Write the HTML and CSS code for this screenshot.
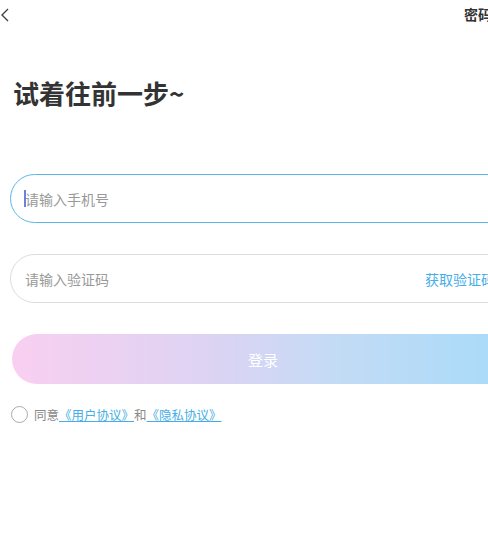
FILE: index.html
```html
<!DOCTYPE html>
<html lang="zh">
<head>
<meta charset="utf-8">
<link rel="stylesheet" href="styles.css">
</head>
<body>
<div class="page">
  <header class="topbar">
    <span class="back"><svg width="10" height="16" viewBox="0 0 10 16"><path d="M8 2 L2 8 L8 14" fill="none" stroke="#444" stroke-width="1.4"/></svg></span>
    <span class="switch">密码登录</span>
  </header>
  <h1 class="title">试着往前一步~</h1>
  <div class="field focused"><span class="caret"></span><span class="ph">请输入手机号</span></div>
  <div class="field"><span class="ph">请输入验证码</span><span class="getcode">获取验证码</span></div>
  <div class="btn">登录</div>
  <div class="agree">
    <span class="radio"></span>
    <span class="agree-text">同意<a class="link">《用户协议》</a>和<a class="link">《隐私协议》</a></span>
  </div>
</div>
</body>
</html>
```
FILE: styles.css
```css
html, body { margin: 0; padding: 0; background: #fff; overflow: hidden; }
body { font-family: "Noto Sans CJK SC", "Liberation Sans", sans-serif; }
.page { width: 524px; display: flex; flex-direction: column; }
.topbar { height: 30px; display: flex; justify-content: space-between; align-items: flex-start; }
.back { padding: 7px 0 0 0px; display: flex; }
.switch { font-size: 14px; font-weight: bold; color: #333; padding-top: 4px; margin-right: 4px; line-height: 20px; }
.title { margin: 45px 0 0 13px; font-size: 26px; line-height: 36px; font-weight: bold; color: #333; }
.field { margin: 60px 0 0 10px; width: 504px; border: 1px solid #dcdcdc; border-radius: 25px; display: flex; align-items: center; padding: 0 14px; box-sizing: border-box; height: 49px; }
.field + .field { margin-top: 31px; }
.field.focused { border: 1.5px solid #5ab8e6; margin-top: 63px; }
.caret { width: 2px; height: 17px; background: #6b7fe6; margin-right: -1px; margin-left: -1px; }
.ph { font-size: 14px; color: #999; flex: 1; }
.getcode { font-size: 14px; color: #46aee6; margin-right: 4px; }
.btn { margin: 31px 0 0 12px; width: 502px; height: 50px; border-radius: 25px; background: linear-gradient(90deg, #f9cff1 0%, #dcd3f3 40%, #c3dbf5 65%, #a6dbf9 100%); color: #fff; font-size: 15px; display: flex; align-items: center; justify-content: center; }
.agree { margin: 21px 0 0 11px; display: flex; align-items: center; }
.radio { width: 15px; height: 15px; border: 1.5px solid #aaa; border-radius: 50%; margin-right: 6px; }
.agree-text { font-size: 12.5px; color: #888; }
.link { color: #46aee6; text-decoration: underline; }
```
